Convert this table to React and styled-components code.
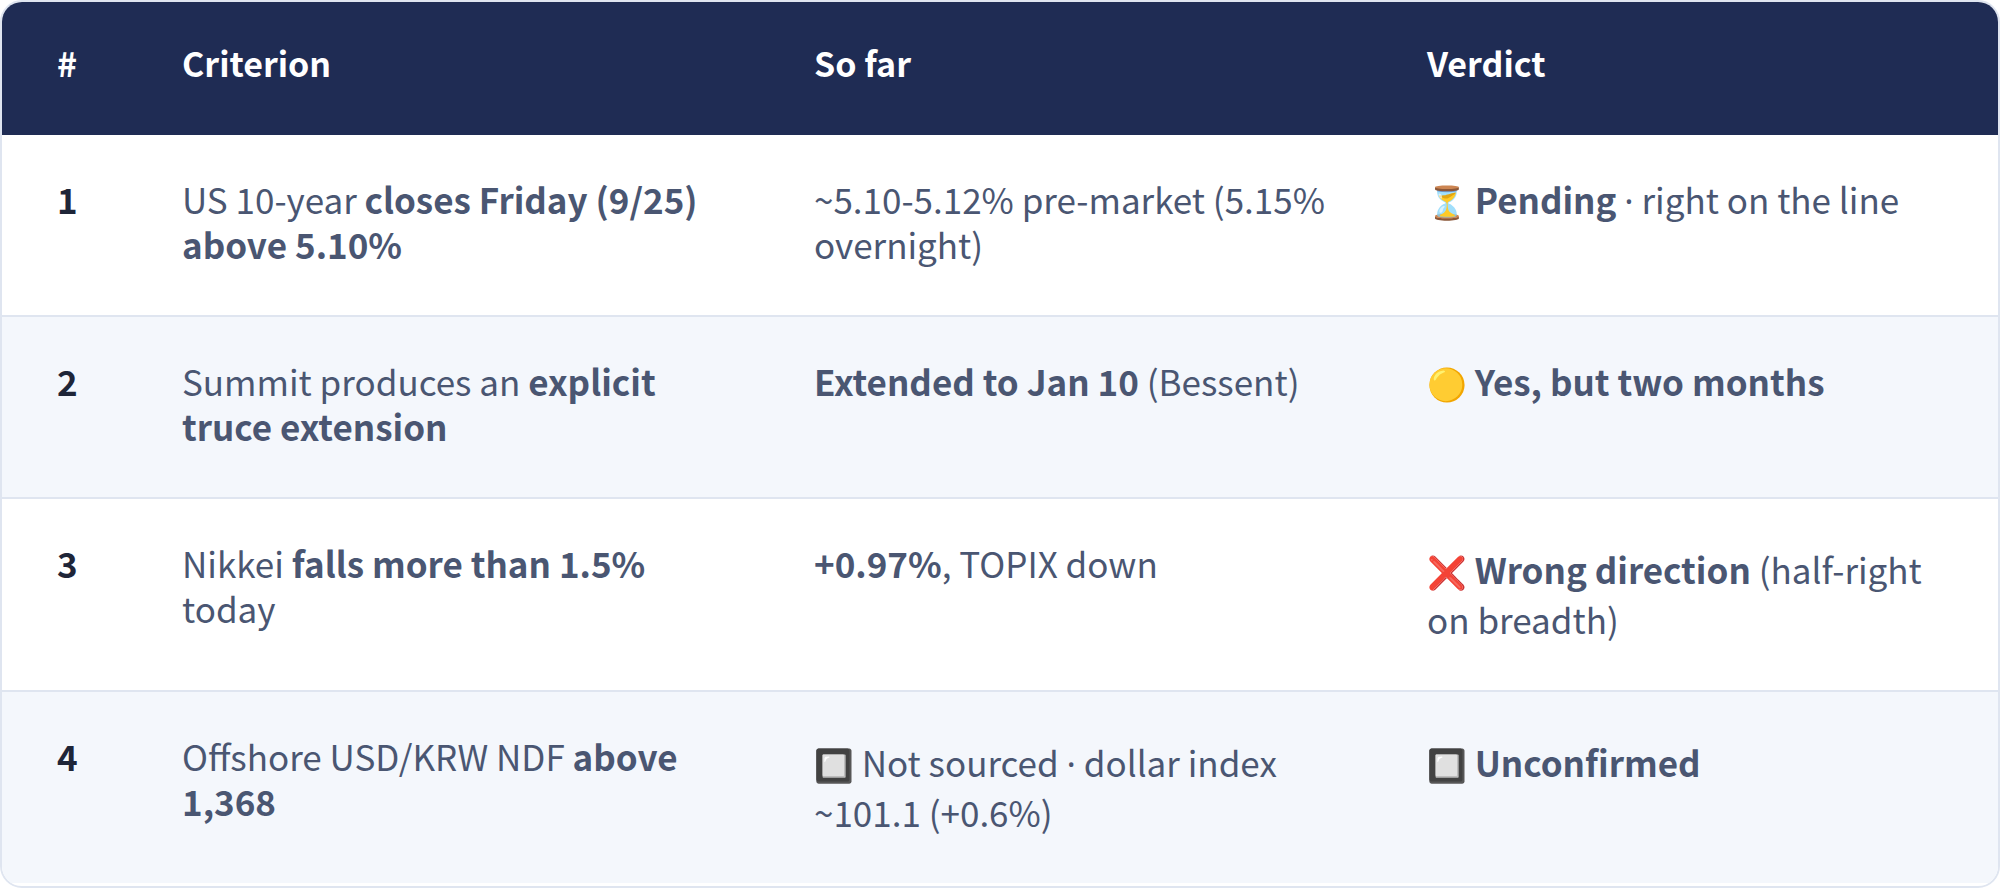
import React from "react";
import styled, { createGlobalStyle } from "styled-components";

const GlobalStyle = createGlobalStyle`
  body {
    margin: 0;
    background: #ffffff;
    font-family: "Noto Sans CJK KR", "Noto Sans", sans-serif;
  }
`;

const TableWrapper = styled.div`
  box-sizing: border-box;
  width: 2000px;
  height: 888px;
  border: 2px solid #dfe5f0;
  border-radius: 22px;
  overflow: hidden;
`;

const Table = styled.table`
  width: 100%;
  border-collapse: collapse;
  table-layout: fixed;
`;

const Th = styled.th`
  height: 120px;
  padding: 0 40px 13px 55px;
  background: #1f2c54;
  color: #ffffff;
  text-align: left;
  font-size: 34px;
  font-weight: 700;
`;

const Row = styled.tr`
  background: ${(p) => (p.$alt ? "#f4f7fc" : "#ffffff")};
  & + & {
    border-top: 2px solid #dfe5f0;
  }
`;

const Td = styled.td`
  padding: 41px 40px 49px 55px;
  vertical-align: top;
  font-size: 35px;
  line-height: 45px;
  color: #4a5672;
`;

const NumCell = styled(Td)`
  color: #1e2538;
  font-weight: 700;
`;

const B = styled.b`
  font-weight: 700;
`;

const Dot = styled.span`
  font-family: "Noto Sans", sans-serif;
`;

const Emoji = styled.span`
  display: inline-block;
  font-family: "Noto Color Emoji", sans-serif;
  font-weight: 400;
  font-size: 32px;
  padding-top: ${(p) => (p.$tall ? "11px" : "0")};
`;

const rows = [
  {
    n: "1",
    criterion: (
      <>
        US 10-year <B>closes Friday (9/25) above 5.10%</B>
      </>
    ),
    sofar: <>~5.10-5.12% pre-market (5.15% overnight)</>,
    verdict: (
      <>
        <Emoji>⏳</Emoji> <B>Pending</B> <Dot>·</Dot> right on the line
      </>
    ),
  },
  {
    n: "2",
    criterion: (
      <>
        Summit produces an <B>explicit truce extension</B>
      </>
    ),
    sofar: (
      <>
        <B>Extended to Jan 10</B> (Bessent)
      </>
    ),
    verdict: (
      <>
        <Emoji>🟡</Emoji> <B>Yes, but two months</B>
      </>
    ),
  },
  {
    n: "3",
    criterion: (
      <>
        Nikkei <B>falls more than 1.5%</B> today
      </>
    ),
    sofar: (
      <>
        <B>+0.97%</B>, TOPIX down
      </>
    ),
    verdict: (
      <>
        <Emoji $tall>❌</Emoji> <B>Wrong direction</B> (half-right on breadth)
      </>
    ),
  },
  {
    n: "4",
    criterion: (
      <>
        Offshore USD/KRW NDF <B>above 1,368</B>
      </>
    ),
    sofar: (
      <>
        <Emoji $tall>🔲</Emoji> Not sourced <Dot>·</Dot> dollar index ~101.1 (+0.6%)
      </>
    ),
    verdict: (
      <>
        <Emoji $tall>🔲</Emoji> <B>Unconfirmed</B>
      </>
    ),
  },
];

export default function App() {
  return (
    <>
      <GlobalStyle />
      <TableWrapper>
        <Table>
          <colgroup>
            <col style={{ width: 125 }} />
            <col style={{ width: 632 }} />
            <col style={{ width: 613 }} />
            <col />
          </colgroup>
          <thead>
            <tr>
              <Th>#</Th>
              <Th>Criterion</Th>
              <Th>So far</Th>
              <Th>Verdict</Th>
            </tr>
          </thead>
          <tbody>
            {rows.map((r, i) => (
              <Row key={r.n} $alt={i % 2 === 1}>
                <NumCell>{r.n}</NumCell>
                <Td>{r.criterion}</Td>
                <Td>{r.sofar}</Td>
                <Td>{r.verdict}</Td>
              </Row>
            ))}
          </tbody>
        </Table>
      </TableWrapper>
    </>
  );
}
